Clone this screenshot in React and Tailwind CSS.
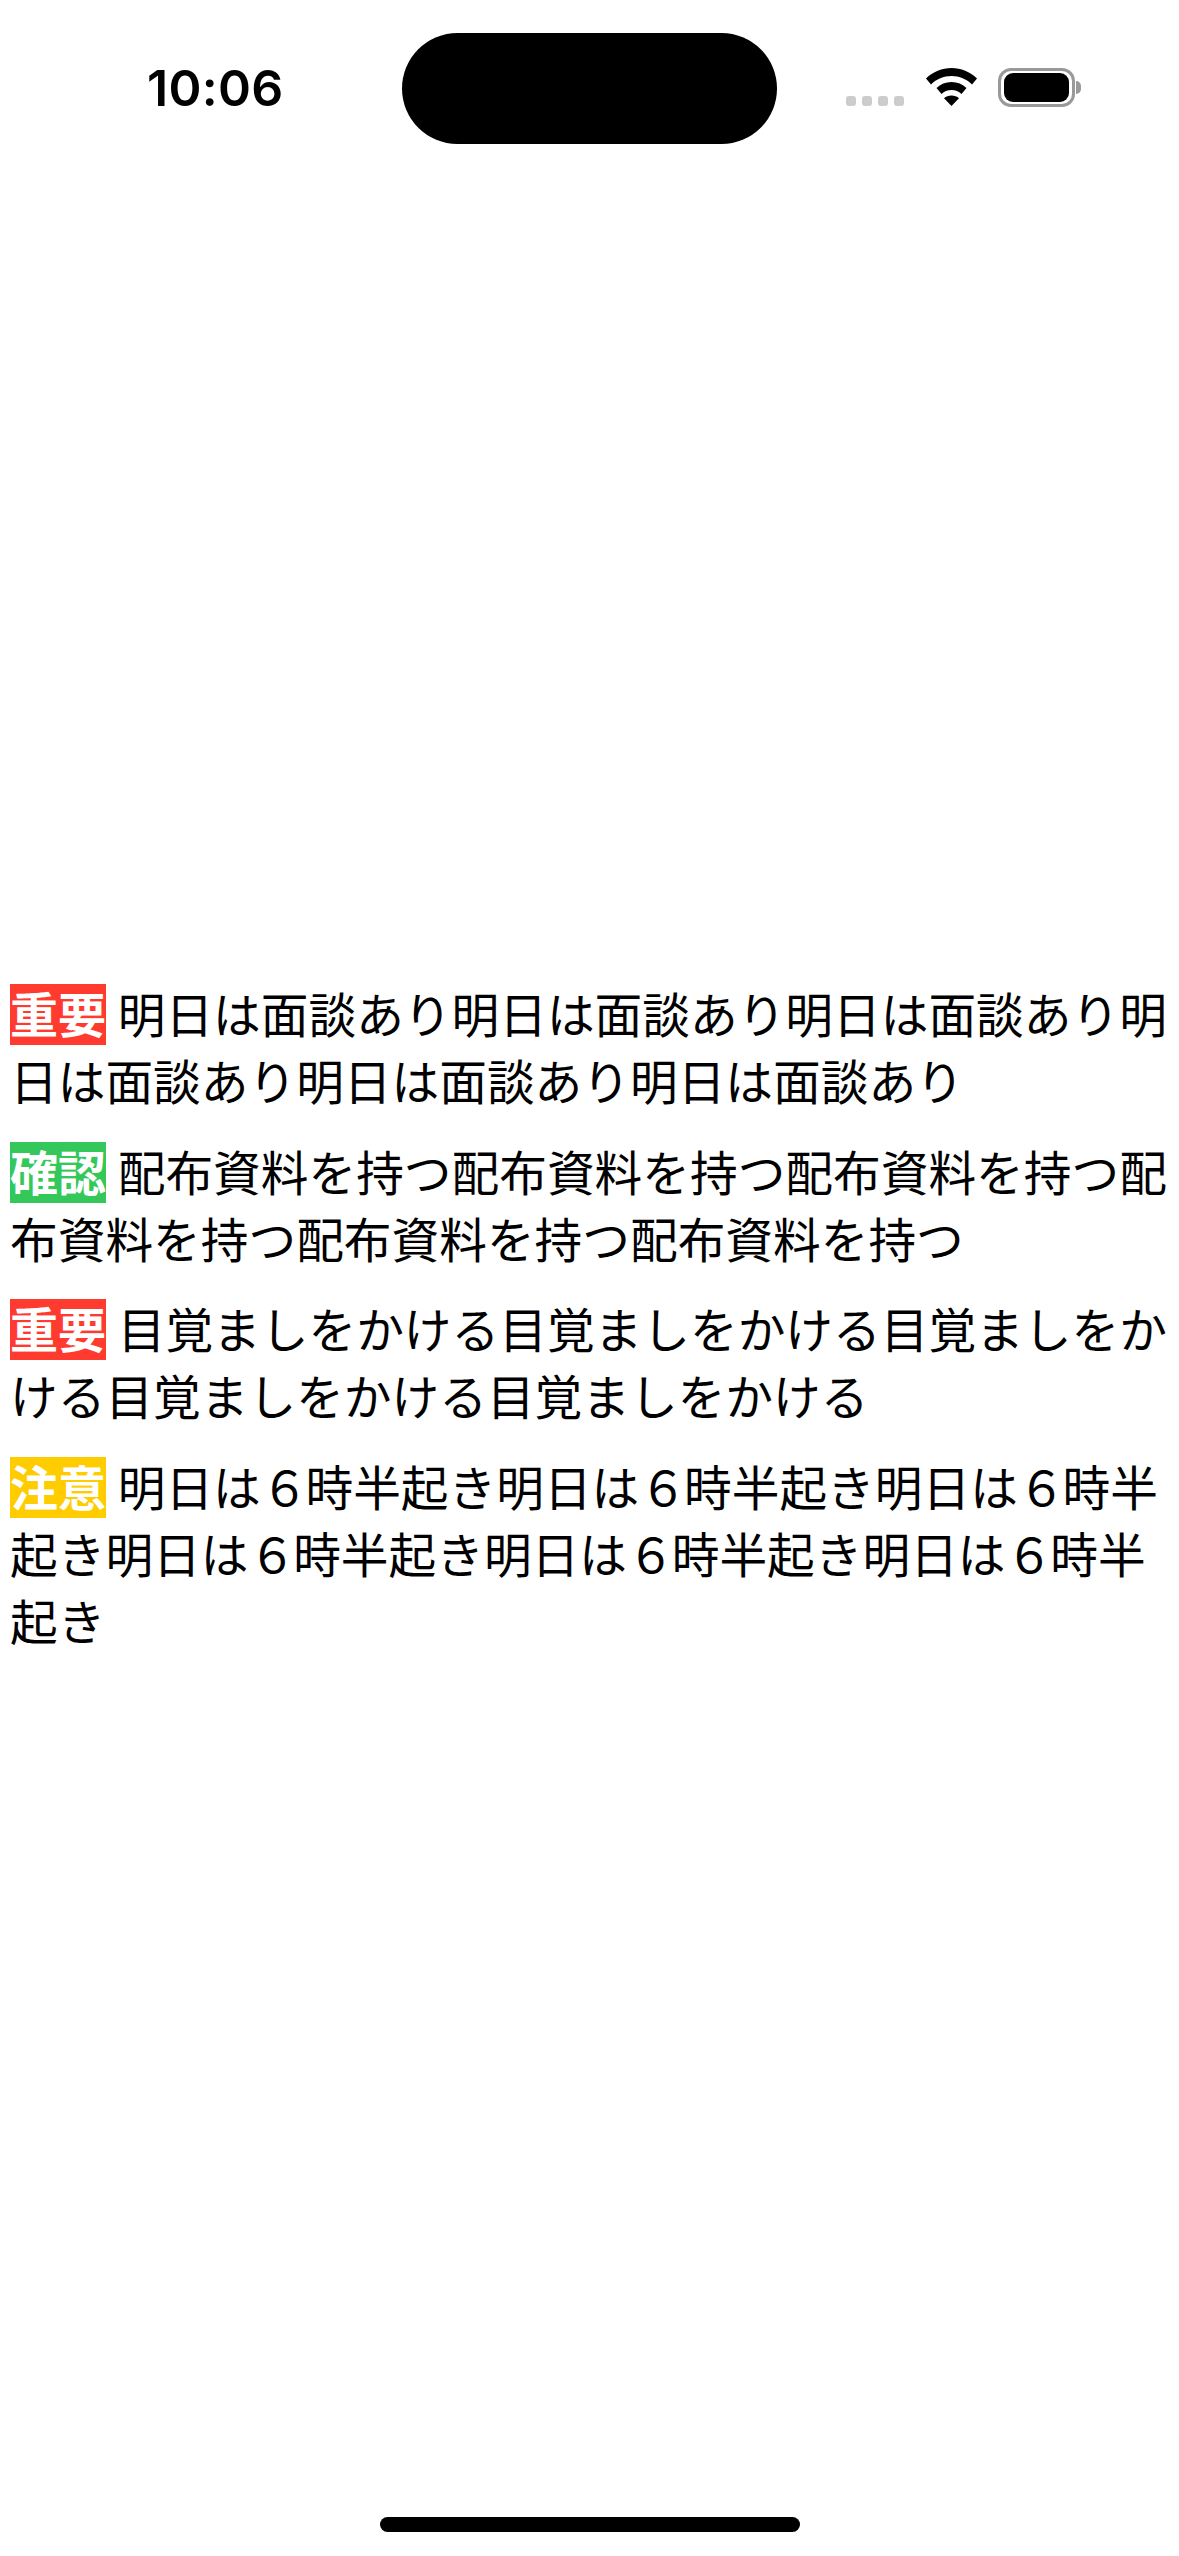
const rows = [
  { tag: '重要', color: 'bg-[#ff3b30]', text: '明日は面談あり明日は面談あり明日は面談あり明日は面談あり明日は面談あり明日は面談あり' },
  { tag: '確認', color: 'bg-[#34c759]', text: '配布資料を持つ配布資料を持つ配布資料を持つ配布資料を持つ配布資料を持つ配布資料を持つ' },
  { tag: '重要', color: 'bg-[#ff3b30]', text: '目覚ましをかける目覚ましをかける目覚ましをかける目覚ましをかける目覚ましをかける' },
  { tag: '注意', color: 'bg-[#ffcc00]', text: '明日は６時半起き明日は６時半起き明日は６時半起き明日は６時半起き明日は６時半起き明日は６時半起き' },
];

// the full-width six sets a little tighter in the reference
function Body({ text }) {
  const parts = text.split('６');
  return parts.map((part, i) => (
    <span key={i}>
      {i > 0 && <span className="tracking-[-3px]">６</span>}
      {part}
    </span>
  ));
}

function StatusBar() {
  return (
    <div className="flex h-[144px] shrink-0 items-start pt-[33px]">
      <div className="mt-[25px] w-[402px] pl-[147px] font-['Inter',sans-serif] text-[50px] font-semibold leading-[60px] tracking-[0.3px] text-black">
        10:06
      </div>
      <div className="h-[111px] w-[375px] rounded-full bg-black" />
      <div className="ml-[69px] mt-[35px] flex items-start">
        <div className="mt-[28px] flex gap-[6px]">
          <span className="h-[10px] w-[10px] rounded-[3px] bg-[#cccccc]" />
          <span className="h-[10px] w-[10px] rounded-[3px] bg-[#cccccc]" />
          <span className="h-[10px] w-[10px] rounded-[3px] bg-[#cccccc]" />
          <span className="h-[10px] w-[10px] rounded-[3px] bg-[#cccccc]" />
        </div>
        <svg className="ml-[22px]" width="51" height="38" viewBox="0 0 51 38">
          <path d="M25.500 0C35 0 44 3.800 51 10.500L46 16.500C40.500 11 33.500 8 25.500 8C17.500 8 10.500 11 5 16.500L0 10.500C7 3.800 16 0 25.500 0Z" fill="#000" />
          <path d="M25.500 14C31.500 14 36.500 16.200 40.500 20L35.500 26C32.800 23.500 29.500 22 25.500 22C21.500 22 18.200 23.500 15.500 26L10.500 20C14.500 16.200 19.500 14 25.500 14Z" fill="#000" />
          <path d="M25.500 27.500C28.500 27.500 31 28.500 33 30.300L25.500 38L18 30.300C20 28.500 22.500 27.500 25.500 27.500Z" fill="#000" />
        </svg>
        <div className="ml-[21px] flex items-center">
          <div className="flex h-[39px] w-[77px] items-center justify-center rounded-[13px] border-[3px] border-[#999999]">
            <div className="h-[29px] w-[65px] rounded-[9px] bg-black" />
          </div>
          <div className="ml-[1px] h-[13px] w-[5px] rounded-r-full bg-[#999999]" />
        </div>
      </div>
    </div>
  );
}

export default function App() {
  return (
    <div className="flex h-[2556px] w-[1179px] flex-col bg-white font-['Noto_Sans_CJK_JP',sans-serif] text-black">
      <StatusBar />
      <main className="mt-[835px] flex flex-col gap-[23.5px] pl-[10px]">
        {rows.map((row, i) => (
          <p key={i} className="text-[47.7px] leading-[67px]">
            <span className={`mr-[1px] inline-block h-[61px] w-[96px] text-center align-baseline text-[48px] font-bold leading-[57px] text-white ${row.color}`}>
              {row.tag}
            </span>{' '}
            <Body text={row.text} />
          </p>
        ))}
      </main>
      <div className="mt-auto flex justify-center pb-[24px]">
        <div className="h-[15px] w-[420px] rounded-full bg-black" />
      </div>
    </div>
  );
}
